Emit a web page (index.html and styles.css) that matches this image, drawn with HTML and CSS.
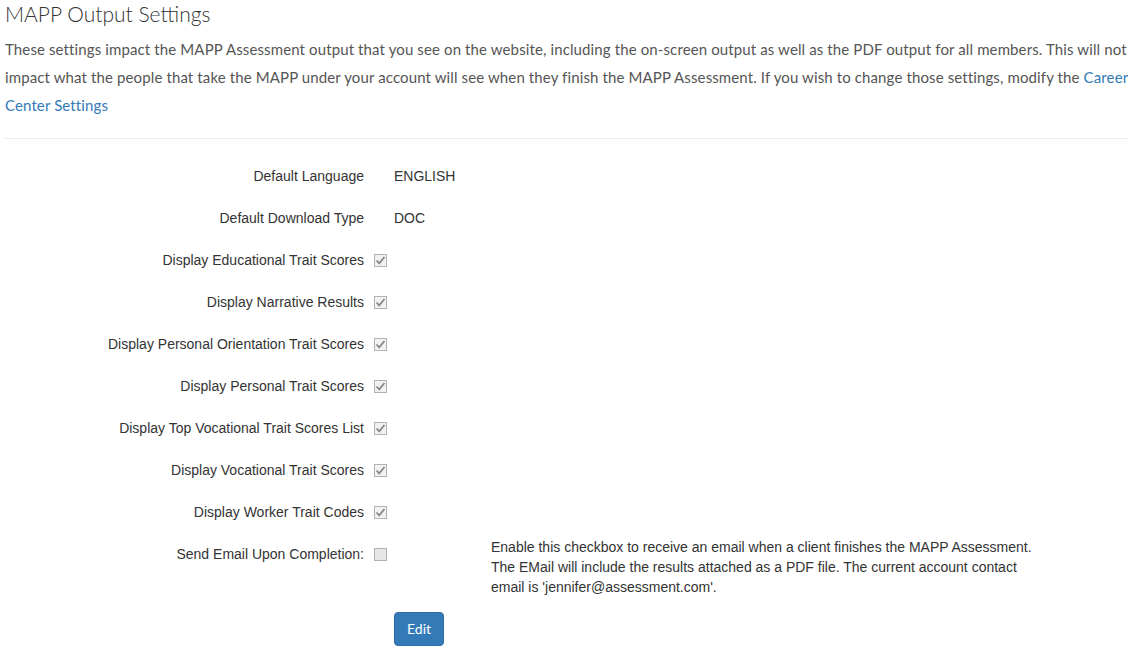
FILE: index.html
```html
<!DOCTYPE html>
<html>
<head>
<meta charset="utf-8">
<title>MAPP Output Settings</title>
<link rel="stylesheet" href="styles.css">
</head>
<body>
<div class="page">
  <h2 class="title">MAPP Output Settings</h2>
  <p class="intro">These settings impact the MAPP Assessment output that you see on the website, including the on-screen output as well as the PDF output for all members. This will not impact what the people that take the MAPP under your account will see when they finish the MAPP Assessment. If you wish to change those settings, modify the <a href="#" class="link">Career Center Settings</a></p>
  <hr class="divider">
  <div class="form">
    <div class="row"><div class="label">Default Language</div><div class="value">ENGLISH</div></div>
    <div class="row"><div class="label">Default Download Type</div><div class="value">DOC</div></div>
    <div class="row"><div class="label">Display Educational Trait Scores</div><input class="check" type="checkbox" checked disabled></div>
    <div class="row"><div class="label">Display Narrative Results</div><input class="check" type="checkbox" checked disabled></div>
    <div class="row"><div class="label">Display Personal Orientation Trait Scores</div><input class="check" type="checkbox" checked disabled></div>
    <div class="row"><div class="label">Display Personal Trait Scores</div><input class="check" type="checkbox" checked disabled></div>
    <div class="row"><div class="label">Display Top Vocational Trait Scores List</div><input class="check" type="checkbox" checked disabled></div>
    <div class="row"><div class="label">Display Vocational Trait Scores</div><input class="check" type="checkbox" checked disabled></div>
    <div class="row"><div class="label">Display Worker Trait Codes</div><input class="check" type="checkbox" checked disabled></div>
    <div class="row row-email">
      <div class="label">Send Email Upon Completion:</div>
      <input class="check" type="checkbox" disabled>
      <div class="note">Enable this checkbox to receive an email when a client finishes the MAPP Assessment. The EMail will include the results attached as a PDF file. The current account contact email is 'jennifer@assessment.com'.</div>
    </div>
    <div class="actions"><button class="btn" type="button">Edit</button></div>
  </div>
</div>
</body>
</html>
```

FILE: styles.css
```css
html, body {
  margin: 0;
  padding: 0;
  overflow: hidden;
  background: #fff;
}
.page {
  width: 1140px;
  padding: 0 5px;
  box-sizing: border-box;
  font-family: "Liberation Sans", Arial, sans-serif;
  font-size: 14px;
  color: #333;
}
.title {
  margin: 0;
  font-family: Lato, sans-serif;
  font-weight: 300;
  font-size: 21px;
  line-height: 28px;
  color: #333;
}
.intro {
  margin: 7px 0 0;
  font-family: Lato, sans-serif;
  font-size: 15px;
  letter-spacing: 0.12px;
  line-height: 28px;
  color: #555;
}
.link {
  color: #337ab7;
  text-decoration: none;
}
.divider {
  border: 0;
  border-top: 1px solid #eee;
  margin: 19px 0 0 -1px;
}
.form {
  padding-top: 20px;
}
.row {
  display: flex;
  align-items: flex-start;
  padding-top: 7px;
  line-height: 20px;
  margin-bottom: 15px;
}
.label {
  width: 359px;
  text-align: right;
  flex: none;
}
.value {
  margin-left: 30px;
}
.check {
  -webkit-appearance: none;
  appearance: none;
  margin: 4px 0 0 10px;
  width: 13px;
  height: 13px;
  flex: none;
  box-sizing: border-box;
  border: 1px solid #b1b1b1;
  background-color: #e6e6e6;
  border-radius: 0;
}
.check:checked {
  background-color: #f2f2f2;
  background-image: url("data:image/svg+xml;utf8,<svg xmlns='http://www.w3.org/2000/svg' width='11' height='11' viewBox='0 0 11 11'><path d='M1.5 5.5 L4.2 8.3 L9.5 2' fill='none' stroke='%23888' stroke-width='1.8'/></svg>");
  background-repeat: no-repeat;
  background-position: center;
}
.row-email {
  padding-top: 0;
}
.row-email .label,
.row-email .check {
  position: relative;
  top: 7px;
}
.note {
  margin-left: 104px;
  width: 555px;
}
.actions {
  padding-left: 389px;
}
.btn {
  font-family: Lato, sans-serif;
  font-size: 14px;
  line-height: 20px;
  padding: 6px 12px;
  color: #fff;
  background: #337ab7;
  border: 1px solid #2e6da4;
  border-radius: 4px;
  cursor: pointer;
}
```
